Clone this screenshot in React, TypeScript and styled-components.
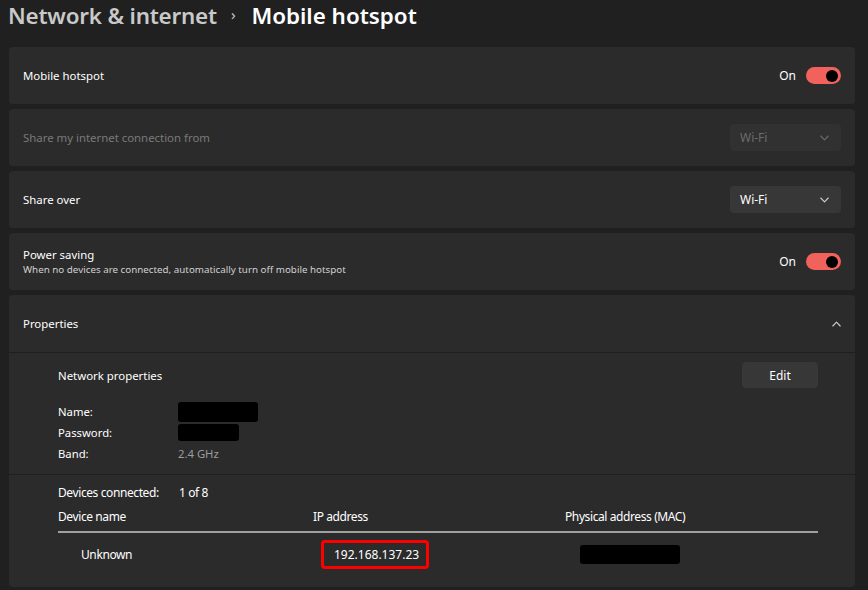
import React from "react"
import styled, { createGlobalStyle } from "styled-components"

const GlobalStyle = createGlobalStyle`
  html, body {
    margin: 0;
    background: #202020;
    color: #ffffff;
    font-family: "Noto Sans", "Open Sans", sans-serif;
  }
`

const Page = styled.div`
  width: 868px;
  height: 590px;
  box-sizing: border-box;
  padding: 0 13px 0 9px;
  overflow: hidden;
`

const Header = styled.h1`
  margin: 0 0 0 -1px;
  height: 30px;
  display: flex;
  align-items: center;
  gap: 14px;
  font-size: 22.4px;
  font-weight: 600;
  letter-spacing: -0.2px;
`

const Crumb = styled.span<{ $current?: boolean }>`
  color: ${(p) => (p.$current ? "#ffffff" : "#c9c9c9")};
  letter-spacing: ${(p) => (p.$current ? "0" : "-0.2px")};
`

const Sep = styled.span`
  color: #c9c9c9;
  font-size: 15px;
  font-weight: 400;
  margin: -2px 2px 0 0;
`

const List = styled.div`
  display: flex;
  flex-direction: column;
  gap: 5px;
  margin-top: 17px;
`

const Card = styled.div`
  background: #2b2b2b;
  border-radius: 4px;
  overflow: hidden;
`

const Row = styled.div`
  height: 57px;
  box-sizing: border-box;
  padding: 0 14px 0 14px;
  display: flex;
  align-items: center;
  justify-content: space-between;
`

const Label = styled.div<{ $disabled?: boolean }>`
  font-size: 11.4px;
  color: ${(p) => (p.$disabled ? "#7a7a7a" : "#ffffff")};
  display: flex;
  flex-direction: column;
  gap: 1px;
`

const Sub = styled.span`
  font-size: 9.8px;
  color: #d0d0d0;
`

const Right = styled.div`
  display: flex;
  align-items: center;
  gap: 10px;
`

const OnText = styled.span`
  font-size: 12px;
  color: #ffffff;
`

const Toggle = styled.div`
  width: 35px;
  height: 17px;
  border-radius: 9px;
  background: #f0625b;
  display: flex;
  align-items: center;
  justify-content: flex-end;
  padding: 0 3px;
  box-sizing: border-box;
`

const Knob = styled.div`
  width: 12px;
  height: 12px;
  border-radius: 50%;
  background: #000000;
`

const Select = styled.div<{ $disabled?: boolean }>`
  width: 111px;
  height: 27px;
  box-sizing: border-box;
  border-radius: 4px;
  background: ${(p) => (p.$disabled ? "#313131" : "#373737")};
  color: ${(p) => (p.$disabled ? "#6c6c6c" : "#ffffff")};
  font-size: 12px;
  display: flex;
  align-items: center;
  justify-content: space-between;
  padding: 0 12px 0 10px;
`

const Chevron = ({ up, color }: { up?: boolean; color: string }) => (
  <svg width="9" height="6" viewBox="0 0 9 6" fill="none">
    <path
      d={up ? "M0.8 5 L4.5 1.2 L8.2 5" : "M0.8 1 L4.5 4.8 L8.2 1"}
      stroke={color}
      strokeWidth="1.1"
      strokeLinecap="round"
      strokeLinejoin="round"
    />
  </svg>
)

const Section = styled.div<{ $pt: number; $pb: number }>`
  border-top: 1px solid #1f1f1f;
  padding: ${(p) => `${p.$pt}px 37px ${p.$pb}px 49px`};
`

const SectionHead = styled.div`
  display: flex;
  align-items: center;
  justify-content: space-between;
  font-size: 11.4px;
`

const EditButton = styled.button`
  width: 76px;
  height: 26px;
  border: none;
  border-radius: 4px;
  background: #373737;
  color: #ffffff;
  font-family: inherit;
  font-size: 12px;
`

const Props = styled.div`
  display: grid;
  grid-template-columns: 120px 1fr;
  grid-auto-rows: 21px;
  align-items: center;
  margin-top: 13px;
  font-size: 11.3px;
`

const PropValue = styled.span`
  color: #9d9d9d;
`

const Redacted = styled.span<{ $w: number; $h: number }>`
  display: block;
  width: ${(p) => p.$w}px;
  height: ${(p) => p.$h}px;
  background: #000000;
  border-radius: 3px;
`

const Condensed = styled.div`
  font-size: 12px;
  letter-spacing: -0.4px;
`

const Devices = styled(Condensed)`
  display: grid;
  grid-template-columns: 121px 1fr;
  height: 18px;
  align-items: center;
`

const TableHead = styled(Condensed)`
  display: grid;
  grid-template-columns: 255px 252px 1fr;
  align-items: center;
  height: 30px;
  border-bottom: 2px solid #a0a0a0;
`

const TableRow = styled(Condensed)`
  display: grid;
  grid-template-columns: 255px 252px 1fr;
  align-items: center;
  height: 39px;
  margin-top: 2px;
`

const Cell = styled.div<{ $indent?: number }>`
  padding-left: ${(p) => p.$indent ?? 0}px;
  display: flex;
  align-items: center;
`

const Highlight = styled.span`
  display: inline-flex;
  align-items: center;
  height: 29px;
  width: 108px;
  box-sizing: border-box;
  padding-left: 10px;
  border: 3px solid #ff0000;
  border-radius: 4px;
  letter-spacing: 0;
`

export default function App() {
  return (
    <>
      <GlobalStyle />
      <Page>
        <Header>
          <Crumb>Network &amp; internet</Crumb>
          <Sep>›</Sep>
          <Crumb $current>Mobile hotspot</Crumb>
        </Header>
        <List>
          <Card>
            <Row>
              <Label>Mobile hotspot</Label>
              <Right>
                <OnText>On</OnText>
                <Toggle>
                  <Knob />
                </Toggle>
              </Right>
            </Row>
          </Card>
          <Card>
            <Row>
              <Label $disabled>Share my internet connection from</Label>
              <Select $disabled>
                Wi-Fi
                <Chevron color="#6c6c6c" />
              </Select>
            </Row>
          </Card>
          <Card>
            <Row>
              <Label>Share over</Label>
              <Select>
                Wi-Fi
                <Chevron color="#cfcfcf" />
              </Select>
            </Row>
          </Card>
          <Card>
            <Row>
              <Label>
                Power saving
                <Sub>When no devices are connected, automatically turn off mobile hotspot</Sub>
              </Label>
              <Right>
                <OnText>On</OnText>
                <Toggle>
                  <Knob />
                </Toggle>
              </Right>
            </Row>
          </Card>
          <Card>
            <Row>
              <Label>Properties</Label>
              <Right>
                <Chevron up color="#cfcfcf" />
              </Right>
            </Row>
            <Section $pt={9} $pb={10}>
              <SectionHead>
                Network properties
                <EditButton>Edit</EditButton>
              </SectionHead>
              <Props>
                <span>Name:</span>
                <Redacted $w={80} $h={20} />
                <span>Password:</span>
                <Redacted $w={61} $h={17} />
                <span>Band:</span>
                <PropValue>2.4 GHz</PropValue>
              </Props>
            </Section>
            <Section $pt={8} $pb={13}>
              <Devices>
                <span>Devices connected:</span>
                <span>1 of 8</span>
              </Devices>
              <TableHead>
                <Cell>Device name</Cell>
                <Cell>IP address</Cell>
                <Cell>Physical address (MAC)</Cell>
              </TableHead>
              <TableRow>
                <Cell $indent={23}>Unknown</Cell>
                <Cell $indent={8}>
                  <Highlight>192.168.137.23</Highlight>
                </Cell>
                <Cell $indent={15}>
                  <Redacted $w={100} $h={19} />
                </Cell>
              </TableRow>
            </Section>
          </Card>
        </List>
      </Page>
    </>
  )
}
